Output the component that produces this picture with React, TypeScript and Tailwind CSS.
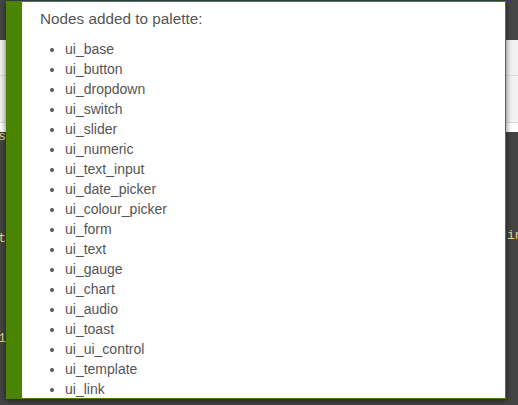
import React from "react"

const nodes = [
  "ui_base",
  "ui_button",
  "ui_dropdown",
  "ui_switch",
  "ui_slider",
  "ui_numeric",
  "ui_text_input",
  "ui_date_picker",
  "ui_colour_picker",
  "ui_form",
  "ui_text",
  "ui_gauge",
  "ui_chart",
  "ui_audio",
  "ui_toast",
  "ui_ui_control",
  "ui_template",
  "ui_link",
]

export default function App() {
  return (
    <div className="relative w-[518px] h-[405px] overflow-hidden bg-[#444] font-['Liberation_Sans',Arial,sans-serif]">
      {/* page underneath */}
      <div className="h-[40px] bg-[#464646]" />
      <div className="h-[36px] bg-[#f3f3f3] border-b border-[#dddddd]" />
      <div className="h-[47px] bg-[#f3f3f3] border-b border-[#dddddd]" />
      <div className="h-[9px] bg-white" />
      <div className="-mt-[4px] flex justify-between font-['Liberation_Mono',monospace] text-[13px] leading-[17px] text-[#e6db74]">
        <div className="w-[6px] overflow-hidden flex flex-col items-end">
          <div className="whitespace-nowrap">ns</div>
          <div className="h-[85px]" />
          <div className="whitespace-nowrap">nt</div>
          <div className="h-[83px]" />
          <div className="whitespace-nowrap">1</div>
        </div>
        <div className="w-[11px] overflow-hidden">
          <div className="h-[99px]" />
          <div className="whitespace-nowrap">in</div>
        </div>
      </div>

      {/* notification */}
      <div className="absolute left-[6px] top-[1px] w-[500px] h-[398px] bg-white border border-[#4b8400] border-l-[16px] shadow-[0_1px_6px_rgba(0,0,0,0.6)] text-[#555] overflow-hidden">
        <div className="pl-[18px] pt-[7px]">
          <p className="text-[15.3px] leading-[20px]">Nodes added to palette:</p>
          <ul className="list-disc pl-[25px] mt-[10px] text-[14px] leading-[20px]">
            {nodes.map((n) => (
              <li key={n}>{n}</li>
            ))}
          </ul>
        </div>
      </div>
    </div>
  )
}
